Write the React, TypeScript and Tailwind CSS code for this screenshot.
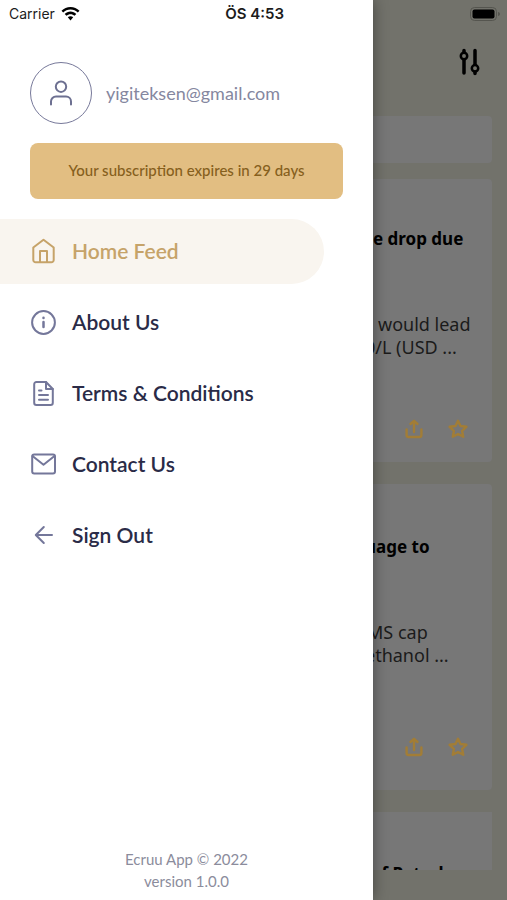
import type { ReactNode } from 'react';

const stroke = {
  fill: 'none',
  stroke: 'currentColor',
  strokeWidth: 2,
  strokeLinecap: 'round',
  strokeLinejoin: 'round',
} as const;

function MenuIcon({ children }: { children: ReactNode }) {
  return (
    <svg className="size-[27px] shrink-0" viewBox="0 0 27 27" aria-hidden="true" {...stroke}>
      {children}
    </svg>
  );
}

function ShareIcon() {
  return (
    <svg className="size-5" viewBox="0 0 20 20" aria-hidden="true" {...stroke} strokeWidth={2.4}>
      <path d="M2.6 10.500V16a2 2 0 0 0 2 2h10.800a2 2 0 0 0 2-2v-5.500M10 13V2.500M6.500 5 10 1.800 13.500 5" />
    </svg>
  );
}

function StarIcon() {
  return (
    <svg className="size-5" viewBox="0 0 20 20" aria-hidden="true" {...stroke} strokeWidth={2.4}>
      <path d="m10 1.8 2.5 5.2 5.9.8-4.300 4 1.100 6L10 15l-5.200 2.800 1.100-6-4.300-4L7.500 7z" />
    </svg>
  );
}

const menu = [
  {
    label: 'Home Feed',
    active: true,
    icon: (
      <>
        <path d="M3.3 9.5 13.5 1.8l10.2 7.7V22a2.3 2.3 0 0 1-2.3 2.3H5.6A2.3 2.3 0 0 1 3.3 22z" />
        <path d="M10 24V13h7v11" />
      </>
    ),
  },
  {
    label: 'About Us',
    icon: (
      <>
        <circle cx="13.5" cy="13.5" r="11.4" />
        <path strokeWidth="2.5" d="M13.5 13v5M13.5 8.800v.1" />
      </>
    ),
  },
  {
    label: 'Terms & Conditions',
    icon: (
      <>
        <path d="M16 2H6.4A2.2 2.2 0 0 0 4.2 4.2v18.6A2.2 2.2 0 0 0 6.4 25h14.2a2.2 2.2 0 0 0 2.2-2.2V9z" />
        <path d="M16 2v7h6.8M9 10.5h2.5M9 15h9M9 19.7h9" />
      </>
    ),
  },
  {
    label: 'Contact Us',
    icon: (
      <>
        <rect x="2.2" y="3.5" width="22.800" height="19" rx="2" />
        <path d="m2.500 5 11 8.800L24.500 5" />
      </>
    ),
  },
  {
    label: 'Sign Out',
    icon: <path d="M22 13H6M13.800 5l-8 8 8 8" />,
  },
];

const posts = [
  {
    title: 'e drop due',
    lines: [
      { text: 'would lead', indent: 'ml-[5px]' },
      { text: '0/L (USD ...', indent: '-ml-2' },
    ],
    card: 'pt-12 pb-[23px]',
    titleIndent: '',
    actions: 'mt-[60px]',
  },
  {
    title: 'uage to',
    lines: [
      { text: 'MS cap', indent: '-ml-1.5' },
      { text: 'ethanol ...', indent: '-ml-2' },
    ],
    card: 'mt-[22px] pt-[51px] pb-[33px]',
    titleIndent: '-ml-2',
    actions: 'mt-[70px]',
  },
];

export default function App() {
  return (
    <div className="grid min-h-screen grid-cols-[373fr_134fr] bg-[#72726b] font-['Lato',sans-serif]">
      <aside className="z-10 flex flex-col bg-white shadow-[0_0_14px_rgba(0,0,0,0.4)]">
        <div className="flex h-7 items-center justify-between pr-[89px] pl-[9px] font-['Inter',sans-serif] text-sm text-[#1c1c1c]">
          <div className="flex items-center gap-1.5">
            <span>Carrier</span>
            <svg className="h-[14px] w-[19px]" viewBox="0 0 18 14" fill="#000" aria-hidden="true">
              <path d="M9 0C5.500 0 2.400 1.400 0 3.700L1.700 5.500C3.600 3.700 6.100 2.600 9 2.600s5.400 1.100 7.300 2.900L18 3.700C15.600 1.400 12.500 0 9 0z" />
              <path d="M9 4.600c-2.300 0-4.300.9-5.800 2.400L5 8.800c1-1 2.400-1.600 4-1.600s3 .6 4 1.600L14.800 7C13.300 5.500 11.300 4.600 9 4.600z" />
              <path d="M9 9.200c-1 0-2 .4-2.700 1.100L9 13.500l2.700-3.200C11 9.600 10 9.200 9 9.200z" />
            </svg>
          </div>
          <span className="text-[15px] font-semibold">ÖS 4:53</span>
        </div>

        <div className="mt-[34px] ml-[30px] flex items-center gap-[14px] text-[#8587a0]">
          <div className="flex size-[62px] items-center justify-center rounded-full border border-[#77799a] text-[#6d7091]">
            <svg className="size-[26px]" viewBox="0 0 26 26" aria-label="Profile" role="img" {...stroke}>
              <circle cx="13" cy="6.700" r="5.200" />
              <path d="M3 24.500V21.500a5 5 0 0 1 5-5h10a5 5 0 0 1 5 5v3" />
            </svg>
          </div>
          <span className="text-lg">yigiteksen@gmail.com</span>
        </div>

        <div className="mx-[30px] mt-[19px] rounded-lg bg-[#e2be82] pt-[17px] pb-[19px] text-center text-[15px] leading-5 font-medium text-[#86601d]">
          Your subscription expires in 29 days
        </div>

        <nav className="mt-5 mr-[49px] flex flex-col gap-1.5">
          {menu.map((item) => (
            <a
              key={item.label}
              href="#"
              className={`flex h-[65px] items-center gap-[15px] rounded-r-full pl-[30px] ${
                item.active ? 'bg-[#f9f5ef] text-[#c6a369]' : 'text-[#74779a]'
              }`}
            >
              <MenuIcon>{item.icon}</MenuIcon>
              <span className={`pb-0.5 text-[21px] leading-7 font-semibold ${item.active ? '' : 'text-[#2a2b47]'}`}>
                {item.label}
              </span>
            </a>
          ))}
        </nav>

        <footer className="mt-auto pb-2 text-center text-[15px] leading-[22px] text-[#8b8c9c]">
          <p>Ecruu App © 2022</p>
          <p>version 1.0.0</p>
        </footer>
      </aside>

      <main className="flex min-w-0 flex-col overflow-hidden pr-[15px] pb-[30px] font-['Noto_Sans',sans-serif] text-lg text-[#1b1b1b]">
        <div className="-mr-2 flex h-7 items-center justify-end">
          <svg className="h-[14px] w-[30px]" viewBox="0 0 30 14" aria-hidden="true">
            <rect x=".5" y=".5" width="26" height="13" rx="4" fill="none" stroke="#55554f" />
            <rect x="2.500" y="2.500" width="22" height="9" rx="2" fill="#000" />
            <path d="M28 5v4c1.300-.4 2-1.100 2-2s-.7-1.600-2-2z" fill="#55554f" />
          </svg>
        </div>
        <button type="button" aria-label="Filters" className="mt-5 mr-3 self-end text-black">
          <svg className="h-[28px] w-[22px]" viewBox="0 0 22 28" fill="none" stroke="currentColor" strokeWidth="3.500" strokeLinecap="round" aria-hidden="true">
            <path d="M6 2.500V4M6 12v13M17 2.500V16M17 24v1.500" />
            <circle cx="6" cy="8" r="3.200" strokeWidth="2.500" />
            <circle cx="17" cy="20.300" r="3.200" strokeWidth="2.500" />
          </svg>
        </button>
        <div className="mt-10 h-[47px] shrink-0 rounded-r-sm bg-[#777]" />
        <div className="mt-4">
          {posts.map((post) => (
            <article key={post.title} className={`rounded-r-sm bg-[#777] whitespace-nowrap ${post.card}`}>
              <h2 className={`text-[17px] leading-6 font-bold text-black ${post.titleIndent}`}>{post.title}</h2>
              <div className="mt-[62px] leading-[23px]">
                {post.lines.map((line) => (
                  <p key={line.text} className={line.indent}>{line.text}</p>
                ))}
              </div>
              <div className={`mr-6 flex justify-end gap-6 text-[#a27d36] ${post.actions}`}>
                <button type="button" aria-label="Share"><ShareIcon /></button>
                <button type="button" aria-label="Favorite"><StarIcon /></button>
              </div>
            </article>
          ))}
        </div>
        <article className="mt-[22px] h-[58px] overflow-hidden bg-[#777] pt-[50px] whitespace-nowrap">
          <h2 className="-ml-0.5 text-[17px] leading-6 font-bold text-black">of Petroleum</h2>
        </article>
      </main>
    </div>
  );
}
